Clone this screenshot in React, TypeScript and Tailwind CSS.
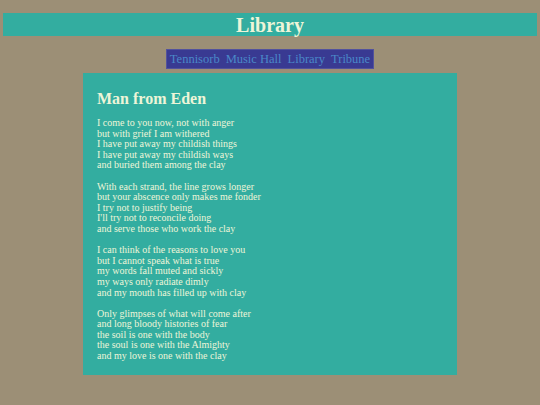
import React from "react";

const stanzas: string[][] = [
  [
    "I come to you now, not with anger",
    "but with grief I am withered",
    "I have put away my childish things",
    "I have put away my childish ways",
    "and buried them among the clay",
  ],
  [
    "With each strand, the line grows longer",
    "but your abscence only makes me fonder",
    "I try not to justify being",
    "I'll try not to reconcile doing",
    "and serve those who work the clay",
  ],
  [
    "I can think of the reasons to love you",
    "but I cannot speak what is true",
    "my words fall muted and sickly",
    "my ways only radiate dimly",
    "and my mouth has filled up with clay",
  ],
  [
    "Only glimpses of what will come after",
    "and long bloody histories of fear",
    "the soil is one with the body",
    "the soul is one with the Almighty",
    "and my love is one with the clay",
  ],
];

export default function App() {
  return (
    <div
      className="w-[540px] h-[405px] bg-[#9c8f76] overflow-hidden pt-[13px]"
      style={{ fontFamily: '"Liberation Serif", serif' }}
    >
      <div className="mx-[3px] h-[23px] bg-[#33ada0] flex items-center justify-center">
        <h1 className="text-[20px] font-bold text-[#eef5d8] leading-none">Library</h1>
      </div>
      <div className="flex justify-center mt-[13px]">
        <nav className="h-[20px] bg-[#393a92] border border-[#52529c] flex items-center px-[3px] gap-[6px] text-[12.5px] text-[#4a88c8]">
          <span>Tennisorb</span>
          <span>Music Hall</span>
          <span>Library</span>
          <span>Tribune</span>
        </nav>
      </div>
      <div className="mx-[83px] mt-[4px] h-[302px] bg-[#33ada0] px-[14px] pt-[17px] text-[#eef5d8]">
        <h2 className="text-[16px] font-bold leading-[18px]">Man from Eden</h2>
        <div className="mt-[10px] text-[10px] leading-[10.6px]">
          {stanzas.map((s, i) => (
            <p key={i} className={i > 0 ? "mt-[10.6px]" : ""}>
              {s.map((l, j) => (
                <React.Fragment key={j}>
                  {l}
                  {j < s.length - 1 && <br />}
                </React.Fragment>
              ))}
            </p>
          ))}
        </div>
      </div>
    </div>
  );
}
